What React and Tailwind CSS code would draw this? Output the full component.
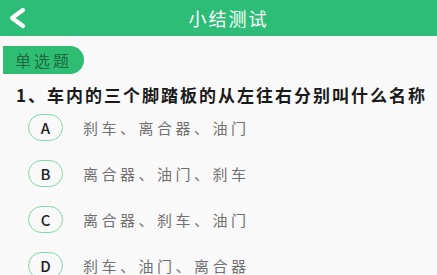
const options = [
  { key: 'A', text: '刹车、离合器、油门' },
  { key: 'B', text: '离合器、油门、刹车' },
  { key: 'C', text: '离合器、刹车、油门' },
  { key: 'D', text: '刹车、油门、离合器' },
]

const font = { fontFamily: '"Noto Sans CJK SC", "Noto Sans", sans-serif' }

function Header() {
  return (
    <div className="relative h-[36px] bg-[#2ebd76] flex items-center justify-center">
      <svg className="absolute left-[7px] top-[7px]" width="20" height="22" viewBox="0 0 20 22">
        <path d="M16 3 L5 11 L16 19" fill="none" stroke="#fff" strokeWidth="4.2" strokeLinecap="round" strokeLinejoin="round" />
      </svg>
      <span className="pl-[20px] text-[18px] tracking-[2px] text-white leading-none">小结测试</span>
    </div>
  )
}

function Option({ k, text }) {
  return (
    <div className="flex items-center h-[46px]">
      <div className="ml-[28px] w-[35px] h-[27px] rounded-full border-[1.7px] border-[#7fd6a6] flex items-center justify-center text-[15px] font-medium text-[#222] leading-none">
        {k}
      </div>
      <span className="ml-[20px] text-[15px] tracking-[3.5px] text-[#707070] leading-none">{text}</span>
    </div>
  )
}

export default function App() {
  return (
    <div className="w-[437px] h-[275px] overflow-hidden bg-[#f9f9f9]" style={font}>
      <Header />
      <div className="pt-[10px]">
        <div className="ml-[3px] w-[81px] h-[28px] bg-[#2fbd74] rounded-l-[5px] rounded-r-full flex items-center pl-[12px]">
          <span className="text-[16px] tracking-[3px] text-[#1e6b3e] leading-none">单选题</span>
        </div>
        <div className="mt-[12px] pl-[16px] text-[17px] font-semibold tracking-[2px] text-[#1a1a1a] leading-none whitespace-nowrap">
          1、车内的三个脚踏板的从左往右分别叫什么名称
        </div>
        <div className="mt-[1px]">
          {options.map(o => <Option key={o.key} k={o.key} text={o.text} />)}
        </div>
      </div>
    </div>
  )
}
